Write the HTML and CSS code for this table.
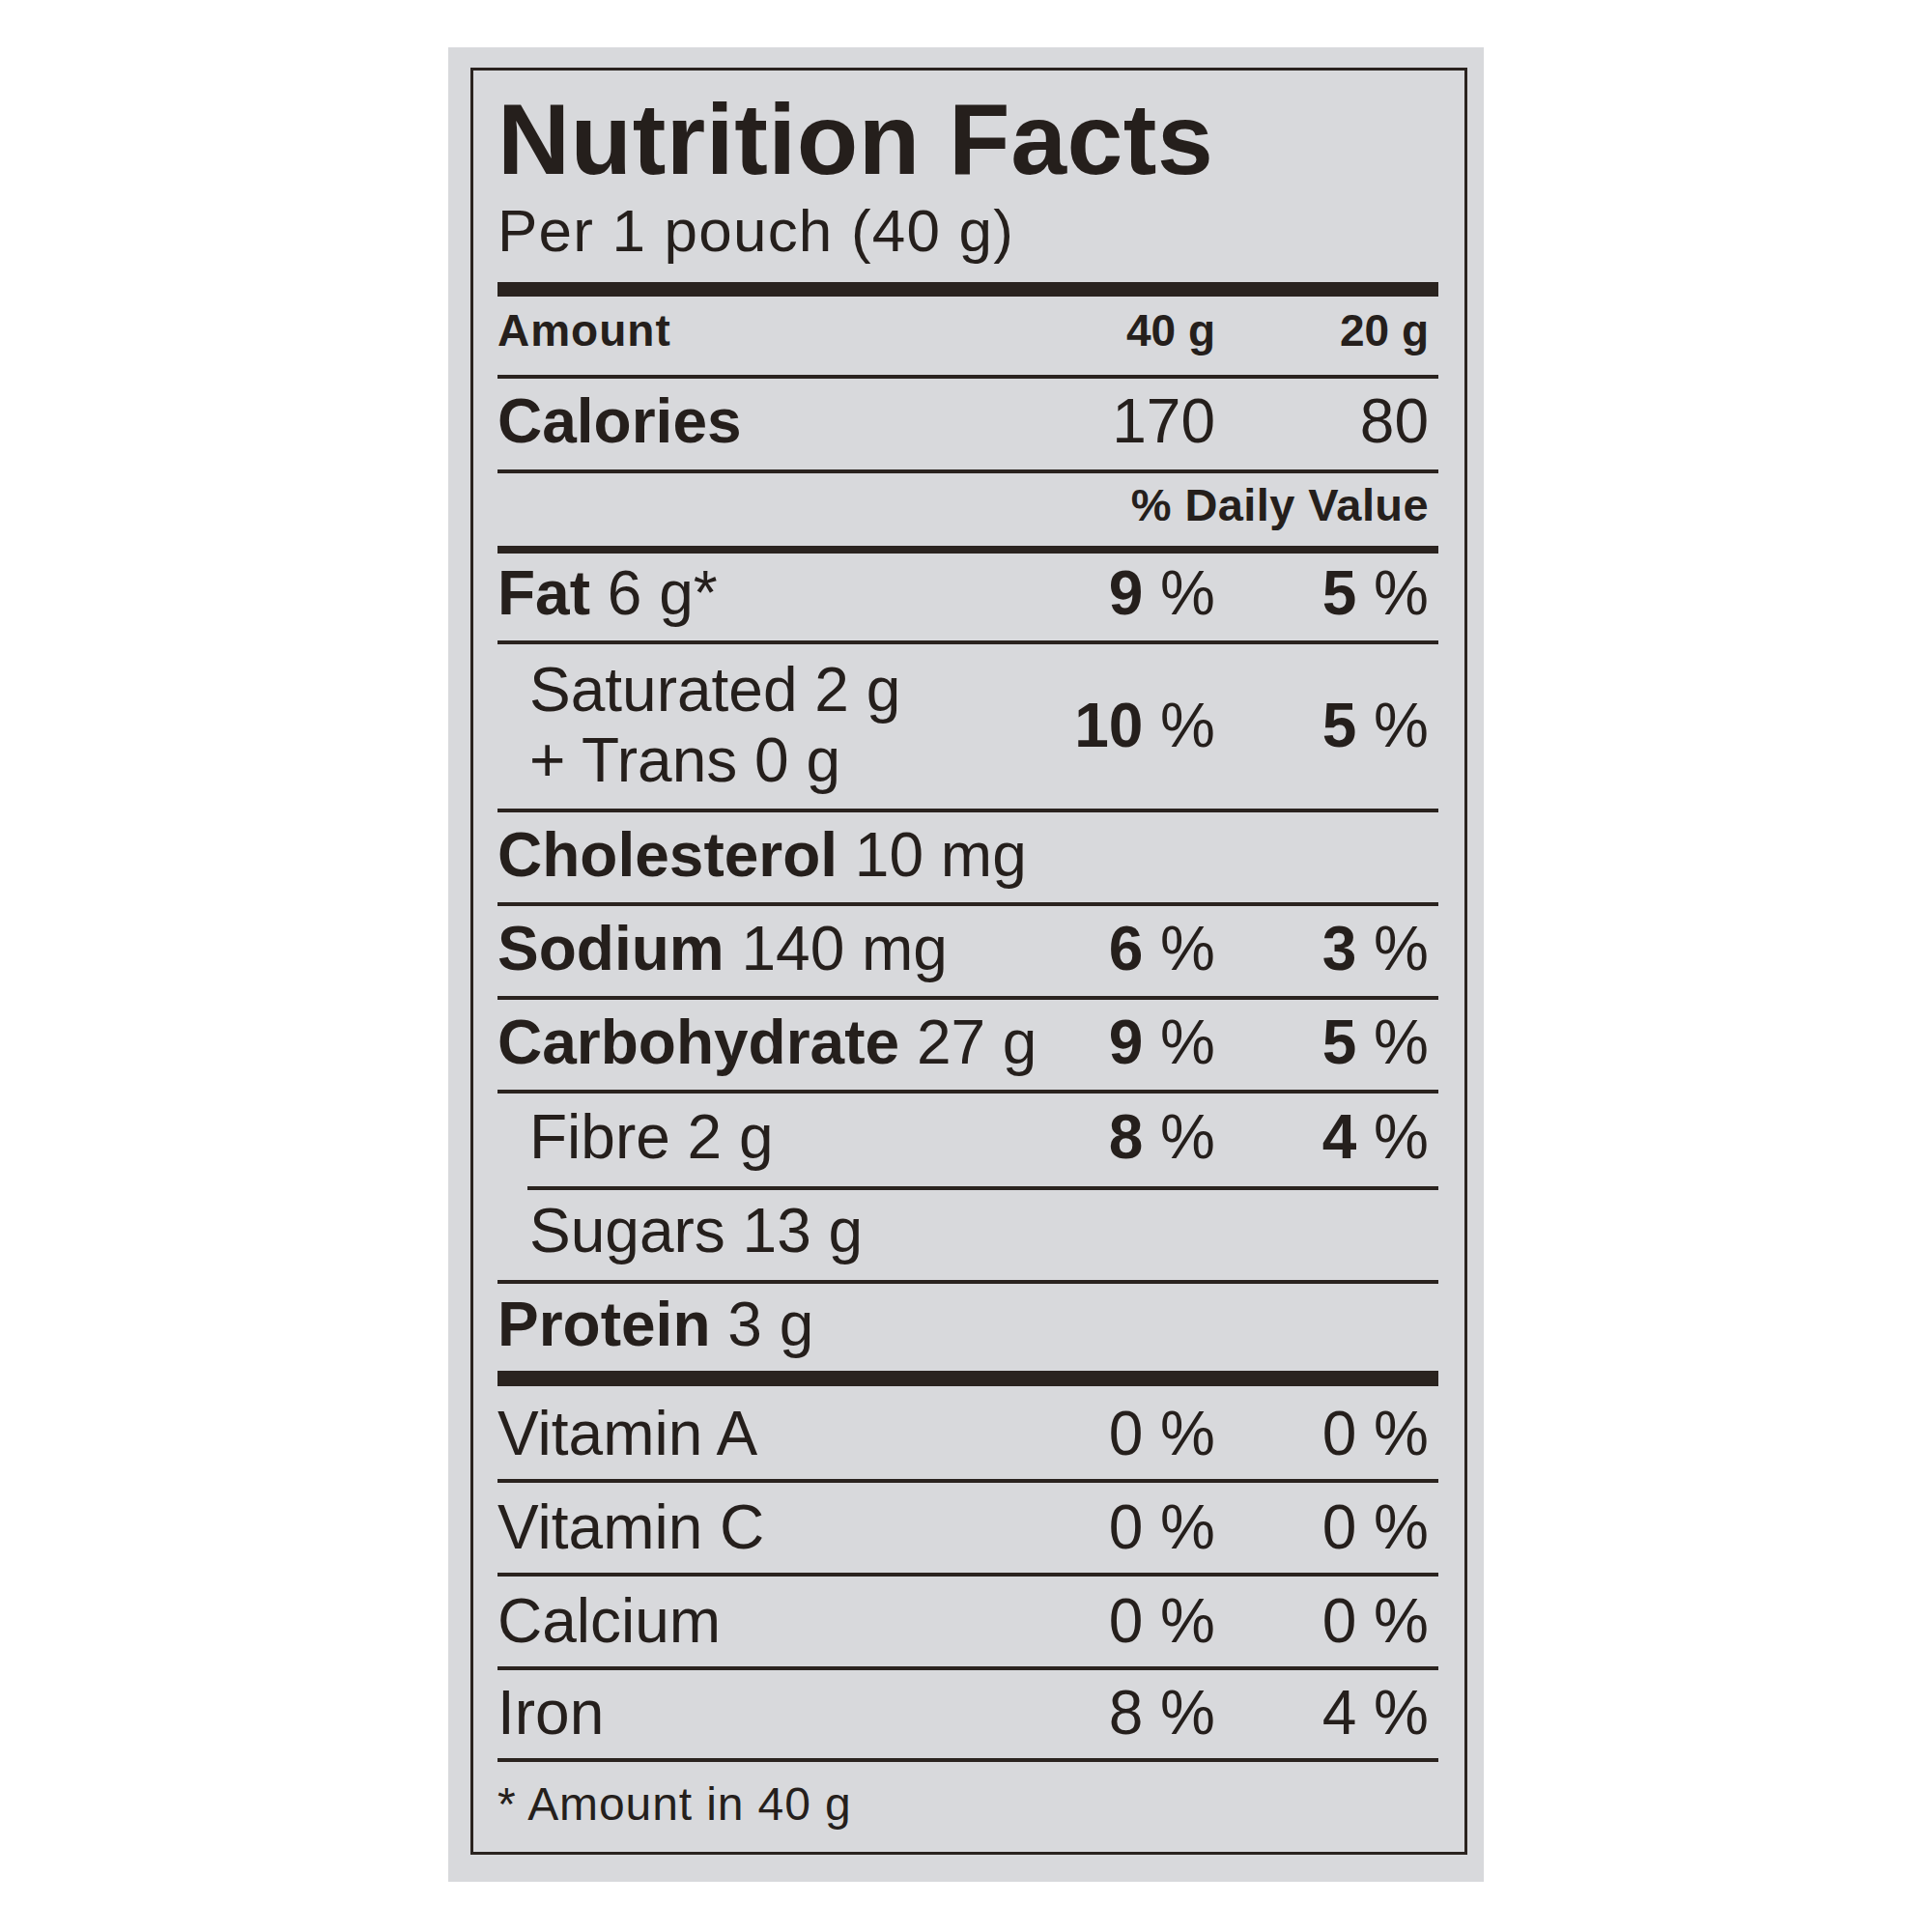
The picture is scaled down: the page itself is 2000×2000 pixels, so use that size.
FILE: index.html
```html
<!DOCTYPE html>
<html lang="en">
<head>
<meta charset="utf-8">
<title>Nutrition Facts</title>
<link rel="stylesheet" href="styles.css">
</head>
<body>
<div class="panel">
  <div class="label">
    <h1 class="title">Nutrition Facts</h1>
    <div class="serving">Per 1 pouch (40 g)</div>
    <div class="rule-thick"></div>

    <div class="row row-amount">
      <div class="name"><b>Amount</b></div>
      <div class="val"><b>40 g</b></div>
      <div class="val"><b>20 g</b></div>
    </div>
    <div class="row row-cal">
      <div class="name"><b>Calories</b></div>
      <div class="val">170</div>
      <div class="val">80</div>
    </div>
    <div class="row row-dv">
      <div class="name"></div>
      <div class="dv"><b>% Daily Value</b></div>
    </div>
    <div class="row row-fat">
      <div class="name"><b>Fat</b> 6 g*</div>
      <div class="val"><b>9</b> %</div>
      <div class="val"><b>5</b> %</div>
    </div>
    <div class="row row-sat">
      <div class="name indent">Saturated 2 g<br>+ Trans 0 g</div>
      <div class="val"><b>10</b> %</div>
      <div class="val"><b>5</b> %</div>
    </div>
    <div class="row">
      <div class="name"><b>Cholesterol</b> 10 mg</div>
      <div class="val"></div>
      <div class="val"></div>
    </div>
    <div class="row">
      <div class="name"><b>Sodium</b> 140 mg</div>
      <div class="val"><b>6</b> %</div>
      <div class="val"><b>3</b> %</div>
    </div>
    <div class="row">
      <div class="name"><b>Carbohydrate</b> 27 g</div>
      <div class="val"><b>9</b> %</div>
      <div class="val"><b>5</b> %</div>
    </div>
    <div class="row row-sub">
      <div class="name">Fibre 2 g</div>
      <div class="val"><b>8</b> %</div>
      <div class="val"><b>4</b> %</div>
    </div>
    <div class="row row-sugar">
      <div class="name indent">Sugars 13 g</div>
      <div class="val"></div>
      <div class="val"></div>
    </div>
    <div class="row row-protein">
      <div class="name"><b>Protein</b> 3 g</div>
      <div class="val"></div>
      <div class="val"></div>
    </div>
    <div class="row row-vit">
      <div class="name">Vitamin A</div>
      <div class="val">0 %</div>
      <div class="val">0 %</div>
    </div>
    <div class="row row-vit2">
      <div class="name">Vitamin C</div>
      <div class="val">0 %</div>
      <div class="val">0 %</div>
    </div>
    <div class="row row-vit2">
      <div class="name">Calcium</div>
      <div class="val">0 %</div>
      <div class="val">0 %</div>
    </div>
    <div class="row row-iron">
      <div class="name">Iron</div>
      <div class="val">8 %</div>
      <div class="val">4 %</div>
    </div>
    <div class="footnote">* Amount in 40 g</div>
  </div>
</div>
</body>
</html>
```

FILE: styles.css
```css
html, body {
  margin: 0;
  padding: 0;
  background: #ffffff;
}

body {
  padding: 49px 0 0 464px;
  font-family: "Liberation Sans", Arial, Helvetica, sans-serif;
  color: #251f1c;
}

.panel {
  width: 1072px;
  height: 1899px;
  box-sizing: border-box;
  background: #d8d9dc;
  padding: 21px 17px 28px 23px;
}

.label {
  box-sizing: border-box;
  height: 1850px;
  border: 3px solid #2a231f;
  padding: 19px 27px 0 25px;
  display: flex;
  flex-direction: column;
}

.title {
  margin: 0;
  font-size: 104px;
  line-height: 104px;
  font-weight: 700;
  letter-spacing: 0.5px;
}

.serving {
  margin-top: 12px;
  font-size: 62px;
  line-height: 62px;
  letter-spacing: 1.2px;
}

.rule-thick {
  margin-top: 22px;
  height: 15px;
  background: #2a231f;
}

.row {
  display: grid;
  grid-template-columns: minmax(0, 1fr) 220px 221px;
  padding: 8px 10px 13px 0;
  font-size: 64px;
  line-height: 72px;
  border-bottom: 4px solid #2a231f;
  white-space: nowrap;
  align-items: center;
}

.row b {
  font-weight: 700;
}

.name {
  overflow: visible;
}

.indent {
  padding-left: 33px;
}

.val {
  text-align: right;
}

.row-amount {
  font-size: 46px;
  line-height: 56px;
  padding-top: 7px;
  padding-bottom: 18px;
  letter-spacing: 1px;
}

.row-amount .val {
  letter-spacing: 0;
}

.row-cal {
  padding-bottom: 14px;
}

.row-dv {
  grid-template-columns: minmax(0, 1fr) auto;
  font-size: 47px;
  line-height: 56px;
  padding-top: 5px;
  padding-bottom: 14px;
  border-bottom-width: 8px;
  letter-spacing: 0.4px;
}

.dv {
  text-align: right;
}

.row-fat {
  padding-top: 5px;
  padding-bottom: 13px;
}

.row-sat {
  line-height: 73px;
  padding-top: 11px;
  padding-bottom: 13px;
}

.row-sub {
  margin-left: 31px;
  padding-top: 9px;
  padding-bottom: 15px;
  padding-left: 2px;
}

.row-sugar {
  padding-top: 6px;
  padding-bottom: 15px;
}

.row-protein {
  padding-top: 6px;
  padding-bottom: 12px;
  border-bottom-width: 16px;
}

.row-vit {
  padding-top: 13px;
  padding-bottom: 11px;
}

.row-vit2 {
  padding-top: 10px;
  padding-bottom: 11px;
}

.row-iron {
  padding-top: 8px;
  padding-bottom: 11px;
}

.footnote {
  font-size: 48px;
  line-height: 56px;
  padding-top: 16px;
  letter-spacing: 0.9px;
}
```
